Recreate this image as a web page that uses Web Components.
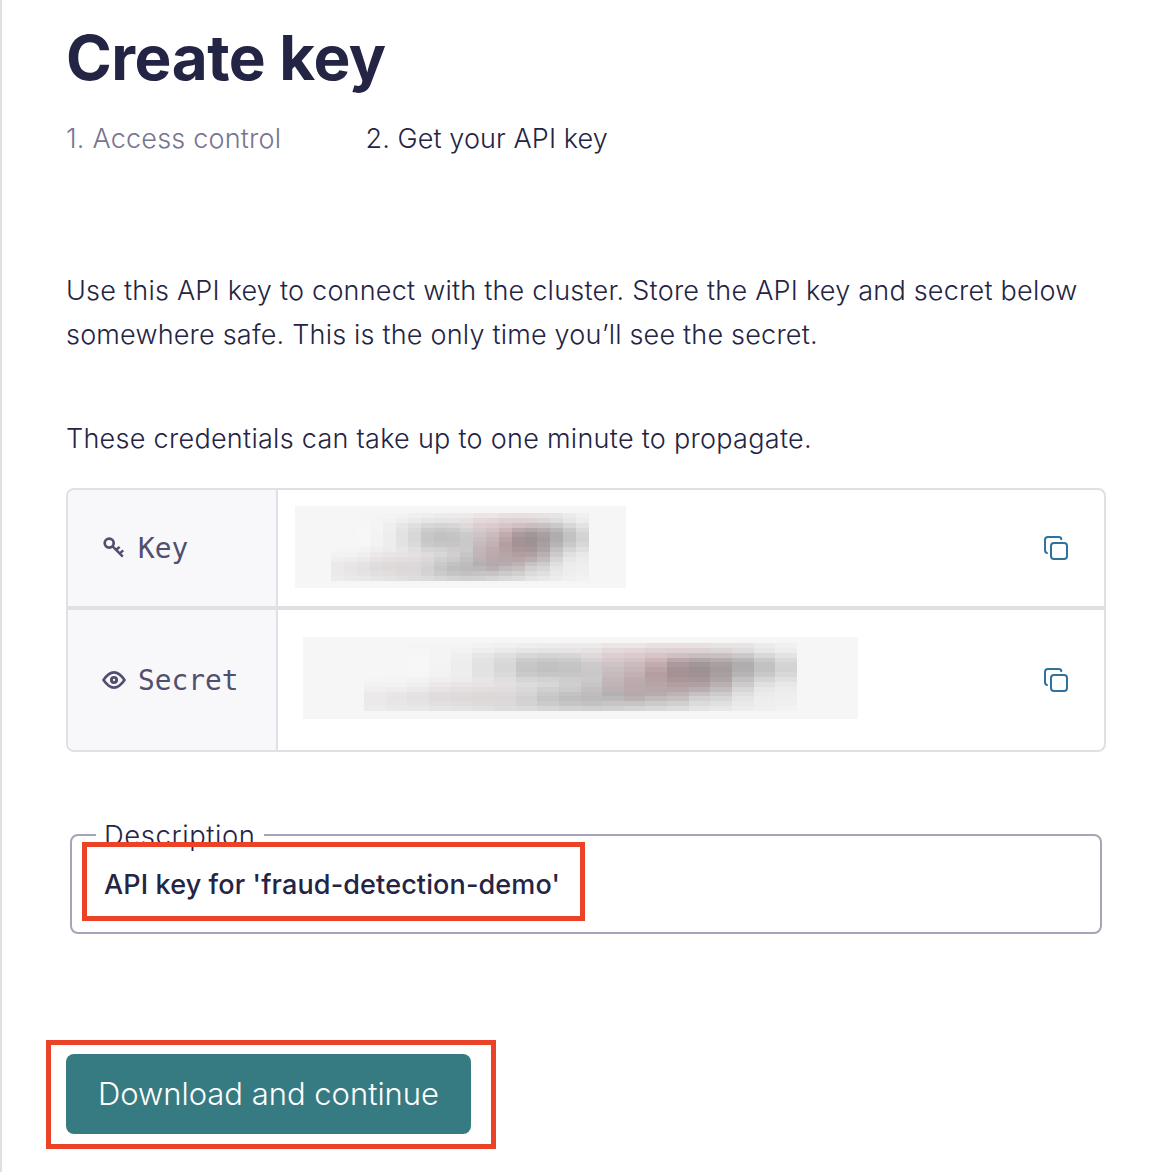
<!DOCTYPE html>
<html lang="en">
<head>
<meta charset="utf-8">
<title>Create key</title>
<style>
html,body{margin:0;background:#fff}
body{height:1172px;overflow:hidden;font-family:Inter,"Liberation Sans",sans-serif;color:#242444}
</style>
</head>
<body>
<create-key-page></create-key-page>
<script>
class UIElement extends HTMLElement {
  constructor() { super(); this.attachShadow({ mode: "open" }); }
  connectedCallback() { this.shadowRoot.innerHTML = this.render(); }
}

// One line per mosaic column, top to bottom.
// Each cell is two hex digits of brightness and one of red tint.
const MOSAIC = [
  "f60 f60 f60 f60 f60 f60 f60 f50 f20 ef0 e91 e91 e91 ec0",
  "f60 f60 f60 f60 f60 f60 f60 f40 f11 ec1 e61 e51 e61 e90",
  "f50 f60 f60 f70 f70 f70 f60 f30 ee1 e91 e22 e12 e31 e80",
  "f40 f40 f40 f40 f30 f30 f20 ef0 e73 e23 dc3 db3 df2 e50",
  "f40 f20 ef0 ee0 ed0 ed0 ed0 eb1 e43 df3 da4 d94 dd2 e30",
  "f20 ee0 e60 e30 e20 e20 e30 e51 e24 dd4 d84 d74 da2 e00",
  "f00 ea0 df0 da0 d70 d70 da0 de1 df3 dc3 d83 d73 d92 dd0",
  "ee0 e60 d70 cc0 c70 c60 ca0 d50 db2 d82 d41 d11 d30 db0",
  "ec0 e40 d40 c90 c20 c10 c60 d20 d61 d00 ca0 c60 cb0 d60",
  "ea1 e41 d51 cb0 c50 c30 c60 cd0 ce1 ca1 c20 be0 c50 d20",
  "e93 e14 d94 d13 ca2 c81 c81 c92 c52 c02 bc1 ba1 c20 d00",
  "e45 d87 cf9 c98 c37 bf6 bb6 b68 b48 b26 b02 b82 c41 d10",
  "e45 d69 cab c2b bba b6a b0b abb aaa a9a a98 b05 c42 d41",
  "e06 d28 c4c b6d abe a3e 9ee a0d a4b a89 ac6 ba3 ca1 d81",
  "df6 d18 c0a a9a 99b 92c 91d 96d 9dd a6a b27 c04 cf2 dd0",
  "e05 d26 bd8 a76 975 917 929 989 a19 ad8 c13 d01 db0 e40",
  "e24 d64 c14 ac5 9f5 9b6 9e7 a47 b05 bc4 cb2 d70 e00 e80",
  "e42 dc2 c82 b71 ad1 ae1 b41 c01 cb0 d60 df0 e50 e90 ed0",
  "ea1 e60 d80 c90 c20 c20 c80 d50 e00 e70 eb0 ed0 ee0 f00",
  "f00 ed0 e30 da0 d40 d30 d80 e00 e80 ec0 ee0 ef0 f00 f20"
].map(col => col.split(" "));

class RedactedValue extends UIElement {
  render() {
    const cells = MOSAIC.map((col, x) => col.map((c, y) => {
      const g = parseInt(c.slice(0, 2), 16), t = parseInt(c[2], 16);
      return `<rect x="${x}" y="${y}" width="1.04" height="1.04" fill="rgb(${Math.round(g + t * 1.6)},${g},${Math.round(g + t * .25)})"/>`;
    }).join("")).join("");
    return `<style>:host{display:block;box-sizing:border-box;height:82px;background:#f6f6f6}
      svg{display:block;width:100%;height:68px;overflow:hidden}</style>
      <svg viewBox="0 0 20 14" preserveAspectRatio="none" shape-rendering="crispEdges">${cells}</svg>`;
  }
}
customElements.define("redacted-value", RedactedValue);

const ICONS = {
  key: `<g fill="none" stroke="#514f6e" stroke-width="2.5"><circle cx="7.2" cy="7.1" r="4.5" stroke-width="2.7"/><path d="M10.4 10.1 20.8 20.6M14.3 13.8 17.6 10.9M17.8 17.4 21.2 14.4"/></g>`,
  eye: `<g fill="none" stroke="#514f6e" stroke-width="2.7"><path d="M1.5 12Q12 -3.2 22.5 12Q12 27.2 1.5 12Z" stroke-linejoin="round"/><circle cx="12" cy="12" r="2.6" stroke-width="2.9"/></g>`,
  copy: `<g fill="none" stroke="#30729e" stroke-width="2" stroke-linecap="round"><rect x="7" y="7" width="16" height="16" rx="3"/><path d="M3 17Q1 16.5 1 14V4Q1 1 4 1H14.5Q17.3 1 17.3 3.3"/></g>`
};
class UiIcon extends UIElement {
  render() {
    return `<style>:host{display:block;width:24px;height:24px;flex:none}svg{display:block}</style>
      <svg width="24" height="24" viewBox="0 0 24 24">${ICONS[this.getAttribute("name")]}</svg>`;
  }
}
customElements.define("ui-icon", UiIcon);

class CredentialRow extends UIElement {
  render() {
    return `<style>
      :host{display:flex;box-sizing:border-box}
      .label{box-sizing:border-box;width:210px;flex:none;padding-left:34px;display:flex;align-items:center;gap:12px;background:#f8f8fb;border-right:2px solid #dfdfe6;color:#514f6e;font:27.8px/36px "DejaVu Sans Mono",monospace}
      .label span{padding-top:2px}
      .value{flex:1}
      .copy{width:60px;flex:none;display:flex;align-items:center}
      </style>
      <div class="label"><ui-icon name="${this.getAttribute("icon")}"></ui-icon><span>${this.getAttribute("label")}</span></div>
      <div class="value"><slot></slot></div>
      <div class="copy"><ui-icon name="copy"></ui-icon></div>`;
  }
}
customElements.define("credential-row", CredentialRow);

class CredentialTable extends UIElement {
  render() {
    return `<style>:host{display:block;box-sizing:border-box;border:2px solid #dfdfe6;border-radius:8px;overflow:hidden}
      ::slotted(:not(:first-child)){border-top:4px solid #dfdfe6}</style><slot></slot>`;
  }
}
customElements.define("credential-table", CredentialTable);

class DescriptionField extends UIElement {
  render() {
    return `<style>
      :host{display:block;position:relative}
      fieldset{box-sizing:border-box;margin:0;height:112px;border:2px solid #a6a5b7;border-radius:8px;padding:0 0 0 32px;min-width:0}
      legend{margin-left:-8px;padding:0 8px;font-size:27.4px;line-height:26px;font-weight:300;letter-spacing:.6px}
      .input{font-size:27px;line-height:34px;font-weight:500;letter-spacing:.13px;margin-top:20px;white-space:nowrap}
      .mark{position:absolute;left:12px;top:20px;width:503px;height:79px;box-sizing:border-box;border:5px solid #eb4328}
      </style>
      <fieldset><legend>Description</legend><div class="input"><slot></slot></div></fieldset><div class="mark"></div>`;
  }
}
customElements.define("description-field", DescriptionField);

class PrimaryButton extends UIElement {
  render() {
    return `<style>:host{display:block;width:450px;height:109px;box-sizing:border-box;border:5px solid #eb4328;padding:9px 15px 0}
      button{display:block;box-sizing:border-box;width:405px;height:80px;border:0;border-radius:8px;background:#377b82;color:#fff;font:300 31px/40px Inter,sans-serif;letter-spacing:-.02px;padding:0;white-space:nowrap}
      </style><button><slot></slot></button>`;
  }
}
customElements.define("primary-button", PrimaryButton);

class CreateKeyPage extends UIElement {
  render() {
    return `<style>
      :host{display:flex;flex-direction:column;box-sizing:border-box;height:1172px;border-left:2px solid #dfdfe6;padding:20px 58px 0 64px;font-weight:300;font-size:27px;line-height:44px}
      h1{margin:0;font-size:62px;line-height:76px;font-weight:700;letter-spacing:-.5px;white-space:nowrap}
      nav{display:flex;margin-top:21px;white-space:nowrap}
      nav span:first-child{width:299.5px;color:#77758f}
      p{margin:0;white-space:nowrap}
      .intro{margin-top:108px}.note{margin-top:60px}
      credential-table{margin-top:27px;height:264px}
      .k{height:116px}.s{height:144px}
      .k redacted-value{width:331px;margin:16px 0 0 17px;padding:7px 37px 0 36px}
      .s redacted-value{width:555px;margin:27px 0 0 25px;padding:6px 61px 0 61px}
      description-field{margin:70px 4px 0}
      primary-button{margin:106px 0 0 -20px}
      .n1{letter-spacing:.2px}.n2{letter-spacing:.1px}
      .l1{letter-spacing:.23px}.l2{letter-spacing:.2px}.l3{letter-spacing:.28px}
      </style>
      <h1>Create key</h1>
      <nav><span class="n1">1. Access control</span><span class="n2">2. Get your API key</span></nav>
      <p class="intro"><span class="l1">Use this API key to connect with the cluster. Store the API key and secret below</span><br><span class="l2">somewhere safe. This is the only time you’ll see the secret.</span></p>
      <p class="note l3">These credentials can take up to one minute to propagate.</p>
      <credential-table>
        <credential-row class="k" icon="key" label="Key"><redacted-value></redacted-value></credential-row>
        <credential-row class="s" icon="eye" label="Secret"><redacted-value></redacted-value></credential-row>
      </credential-table>
      <description-field>API key for 'fraud-detection-demo'</description-field>
      <primary-button>Download and continue</primary-button>`;
  }
}
customElements.define("create-key-page", CreateKeyPage);
</script>
</body>
</html>
